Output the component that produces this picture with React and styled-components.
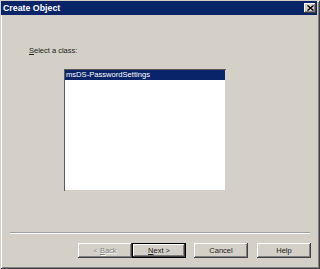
import React from 'react'
import styled, { createGlobalStyle } from 'styled-components'

const Global = createGlobalStyle`
html, body {
  margin: 0;
  padding: 0;
  background: #d4d0c8;
}
`

function CloseIcon() {
  return (
    <svg width="7" height="6" viewBox="0 0 7 6">
      <path d="M0.5 0.5 L6.5 5.5 M6.5 0.5 L0.5 5.5" stroke="#000" strokeWidth="1.4" fill="none" />
    </svg>
  )
}

export default function App() {
  return (
    <>
      <Global />
      <Window>
        <TitleBar>
          <Title>Create Object</Title>
          <CloseButton><CloseIcon /></CloseButton>
        </TitleBar>
        <Body>
          <Label><u>S</u>elect a class:</Label>
          <ListBox>
            <ListItem selected>msDS-PasswordSettings</ListItem>
          </ListBox>
          <Spacer />
          <Separator />
          <ButtonRow>
            <Button disabled><span>&lt; <u>B</u>ack</span></Button>
            <Button primary><span><u>N</u>ext &gt;</span></Button>
            <Button gap={8}>Cancel</Button>
            <Button gap={9}>Help</Button>
          </ButtonRow>
        </Body>
      </Window>
    </>
  )
}

const Window = styled.div`
width: 320px;
height: 269px;
box-sizing: border-box;
padding: 1px 3px 3px 1px;
background: #d4d0c8;
display: flex;
flex-direction: column;
box-shadow: inset 1px 1px #d4d0c8, inset -1px -1px #404040, inset 2px 2px #ffffff, inset -2px -2px #808080;
font-family: "Liberation Sans", Arial, sans-serif;
`

const TitleBar = styled.div`
height: 14px;
background: #0a246a;
display: flex;
align-items: center;
justify-content: space-between;
padding: 0 1px 0 2px;
`

const Title = styled.div`
color: #fff;
font-weight: bold;
font-size: 8.8px;
`

const CloseButton = styled.div`
width: 12px;
height: 10px;
box-sizing: border-box;
background: #d4d0c8;
display: flex;
align-items: center;
justify-content: center;
box-shadow: inset -1px -1px #404040, inset 1px 1px #ffffff, inset -2px -2px #808080;
`

const Body = styled.div`
flex: 1;
display: flex;
flex-direction: column;
`

const Label = styled.div`
margin: 31px 0 0 28px;
font-size: 7.5px;
line-height: 10px;
color: #222;
`

const ListBox = styled.div`
margin: 13px 0 0 63px;
width: 162px;
height: 122px;
box-sizing: border-box;
background: #fff;
padding: 1px;
box-shadow: inset 1px 1px #5a5a5a, inset -1px -1px #d4d0c8;
`

const ListItem = styled.div`
height: 10px;
line-height: 10px;
font-size: 7.6px;
padding-left: 1px;
background: ${p => (p.selected ? '#0a246a' : 'transparent')};
color: ${p => (p.selected ? '#fff' : '#000')};
`

const Spacer = styled.div`
flex: 1;
`

const Separator = styled.div`
margin-left: 9px;
width: 300px;
height: 1px;
background: #a0a0a0;
border-bottom: 1px solid #ffffff;
`

const ButtonRow = styled.div`
display: flex;
justify-content: flex-end;
padding: 9px 6px 8px 0;
`

const Button = styled.div`
width: 54px;
height: 15px;
box-sizing: border-box;
margin-left: ${p => (p.gap || 0)}px;
display: flex;
align-items: center;
justify-content: center;
font-size: 7.5px;
color: ${p => (p.disabled ? '#808080' : '#222')};
text-shadow: ${p => (p.disabled ? '1px 1px #ffffff' : 'none')};
background: #d4d0c8;
border: ${p => (p.primary ? '1px solid #000' : 'none')};
box-shadow: inset -1px -1px #404040, inset 1px 1px #ffffff, inset -2px -2px #808080;
`
